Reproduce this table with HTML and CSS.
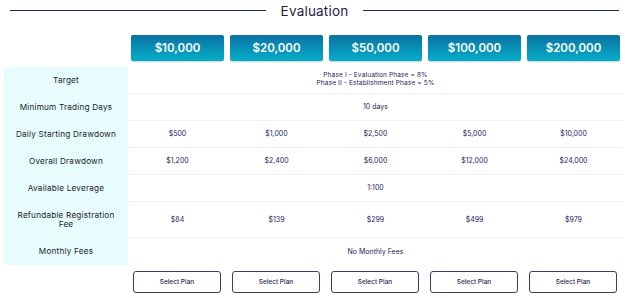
FILE: index.html
```html
<!DOCTYPE html>
<html>
<head>
<meta charset="utf-8">
<link rel="stylesheet" href="styles.css">
</head>
<body>
<div class="page">
  <div class="title"><span class="line"></span><h2>Evaluation</h2><span class="line"></span></div>
  <div class="grid">
    <div class="corner"></div>
    <div class="amount">$10,000</div>
    <div class="amount">$20,000</div>
    <div class="amount">$50,000</div>
    <div class="amount">$100,000</div>
    <div class="amount">$200,000</div>

    <div class="label first">Target</div>
    <div class="cell span first two">Phase I - Evaluation Phase = 8%<br>Phase II - Establishment Phase = 5%</div>

    <div class="label">Minimum Trading Days</div>
    <div class="cell span">10 days</div>

    <div class="label">Daily Starting Drawdown</div>
    <div class="cell">$500</div>
    <div class="cell">$1,000</div>
    <div class="cell">$2,500</div>
    <div class="cell">$5,000</div>
    <div class="cell">$10,000</div>

    <div class="label">Overall Drawdown</div>
    <div class="cell">$1,200</div>
    <div class="cell">$2,400</div>
    <div class="cell">$6,000</div>
    <div class="cell">$12,000</div>
    <div class="cell">$24,000</div>

    <div class="label">Available Leverage</div>
    <div class="cell span">1:100</div>

    <div class="label tall">Refundable Registration<br>Fee</div>
    <div class="cell tall">$84</div>
    <div class="cell tall">$139</div>
    <div class="cell tall">$299</div>
    <div class="cell tall">$499</div>
    <div class="cell tall">$979</div>

    <div class="label last">Monthly Fees</div>
    <div class="cell span last">No Monthly Fees</div>

    <div class="corner"></div>
    <div class="select">Select Plan</div>
    <div class="select">Select Plan</div>
    <div class="select">Select Plan</div>
    <div class="select">Select Plan</div>
    <div class="select">Select Plan</div>
  </div>
</div>
</body>
</html>
```
FILE: styles.css
```css
* { box-sizing: border-box; }
body {
  margin: 0;
  background: #ffffff;
  font-family: "Inter", "Open Sans", "Liberation Sans", sans-serif;
  color: #1f1f5c;
}
.page { width: 625px; }
.title {
  display: flex;
  align-items: center;
  height: 21px;
  padding: 0 6px 0 10px;
  gap: 15px;
}
.title .line {
  flex: 1;
  height: 1px;
  background: #1d2b5b;
}
.title h2 {
  margin: 0;
  font-size: 13.5px;
  font-weight: 400;
  color: #1e1f45;
  letter-spacing: 0.2px;
}
.grid {
  margin-top: 14px;
  padding-left: 4px;
  display: grid;
  grid-template-columns: 124px repeat(5, 99px);
}
.amount {
  height: 26px;
  margin: 0 3px 6px 3px;
  border-radius: 2px;
  background: linear-gradient(#0a72a2, #06adc8);
  box-shadow: 0 1px 1px rgba(0, 40, 60, 0.2);
  color: #fff;
  font-weight: 600;
  font-size: 11.5px;
  display: flex;
  align-items: center;
  justify-content: center;
}
.label {
  background: #e6fcfd;
  color: #1c1c2c;
  font-size: 8.2px;
  letter-spacing: 0.2px;
  line-height: 8.5px;
  height: 27px;
  border-bottom: 1px solid #f2f5f5;
  display: flex;
  align-items: center;
  justify-content: center;
  text-align: center;
}
.cell {
  height: 27px;
  border-bottom: 1px solid #f0f0f0;
  font-size: 7px;
  line-height: 8px;
  color: #23235e;
  display: flex;
  align-items: center;
  justify-content: center;
  text-align: center;
}
.cell.two {
  font-size: 6.6px;
  line-height: 7.6px;
  letter-spacing: 0.1px;
}
.span { grid-column: span 5; }
.first { height: 27px; }
.tall { height: 36px; }
.last { height: 27px; border-bottom: none; }
.select {
  margin: 6px 6px 0 5px;
  height: 22px;
  border: 1.5px solid #3b3c72;
  border-radius: 3px;
  font-size: 6.5px;
  font-weight: 500;
  color: #1f1f4f;
  display: flex;
  align-items: center;
  justify-content: center;
}
```
